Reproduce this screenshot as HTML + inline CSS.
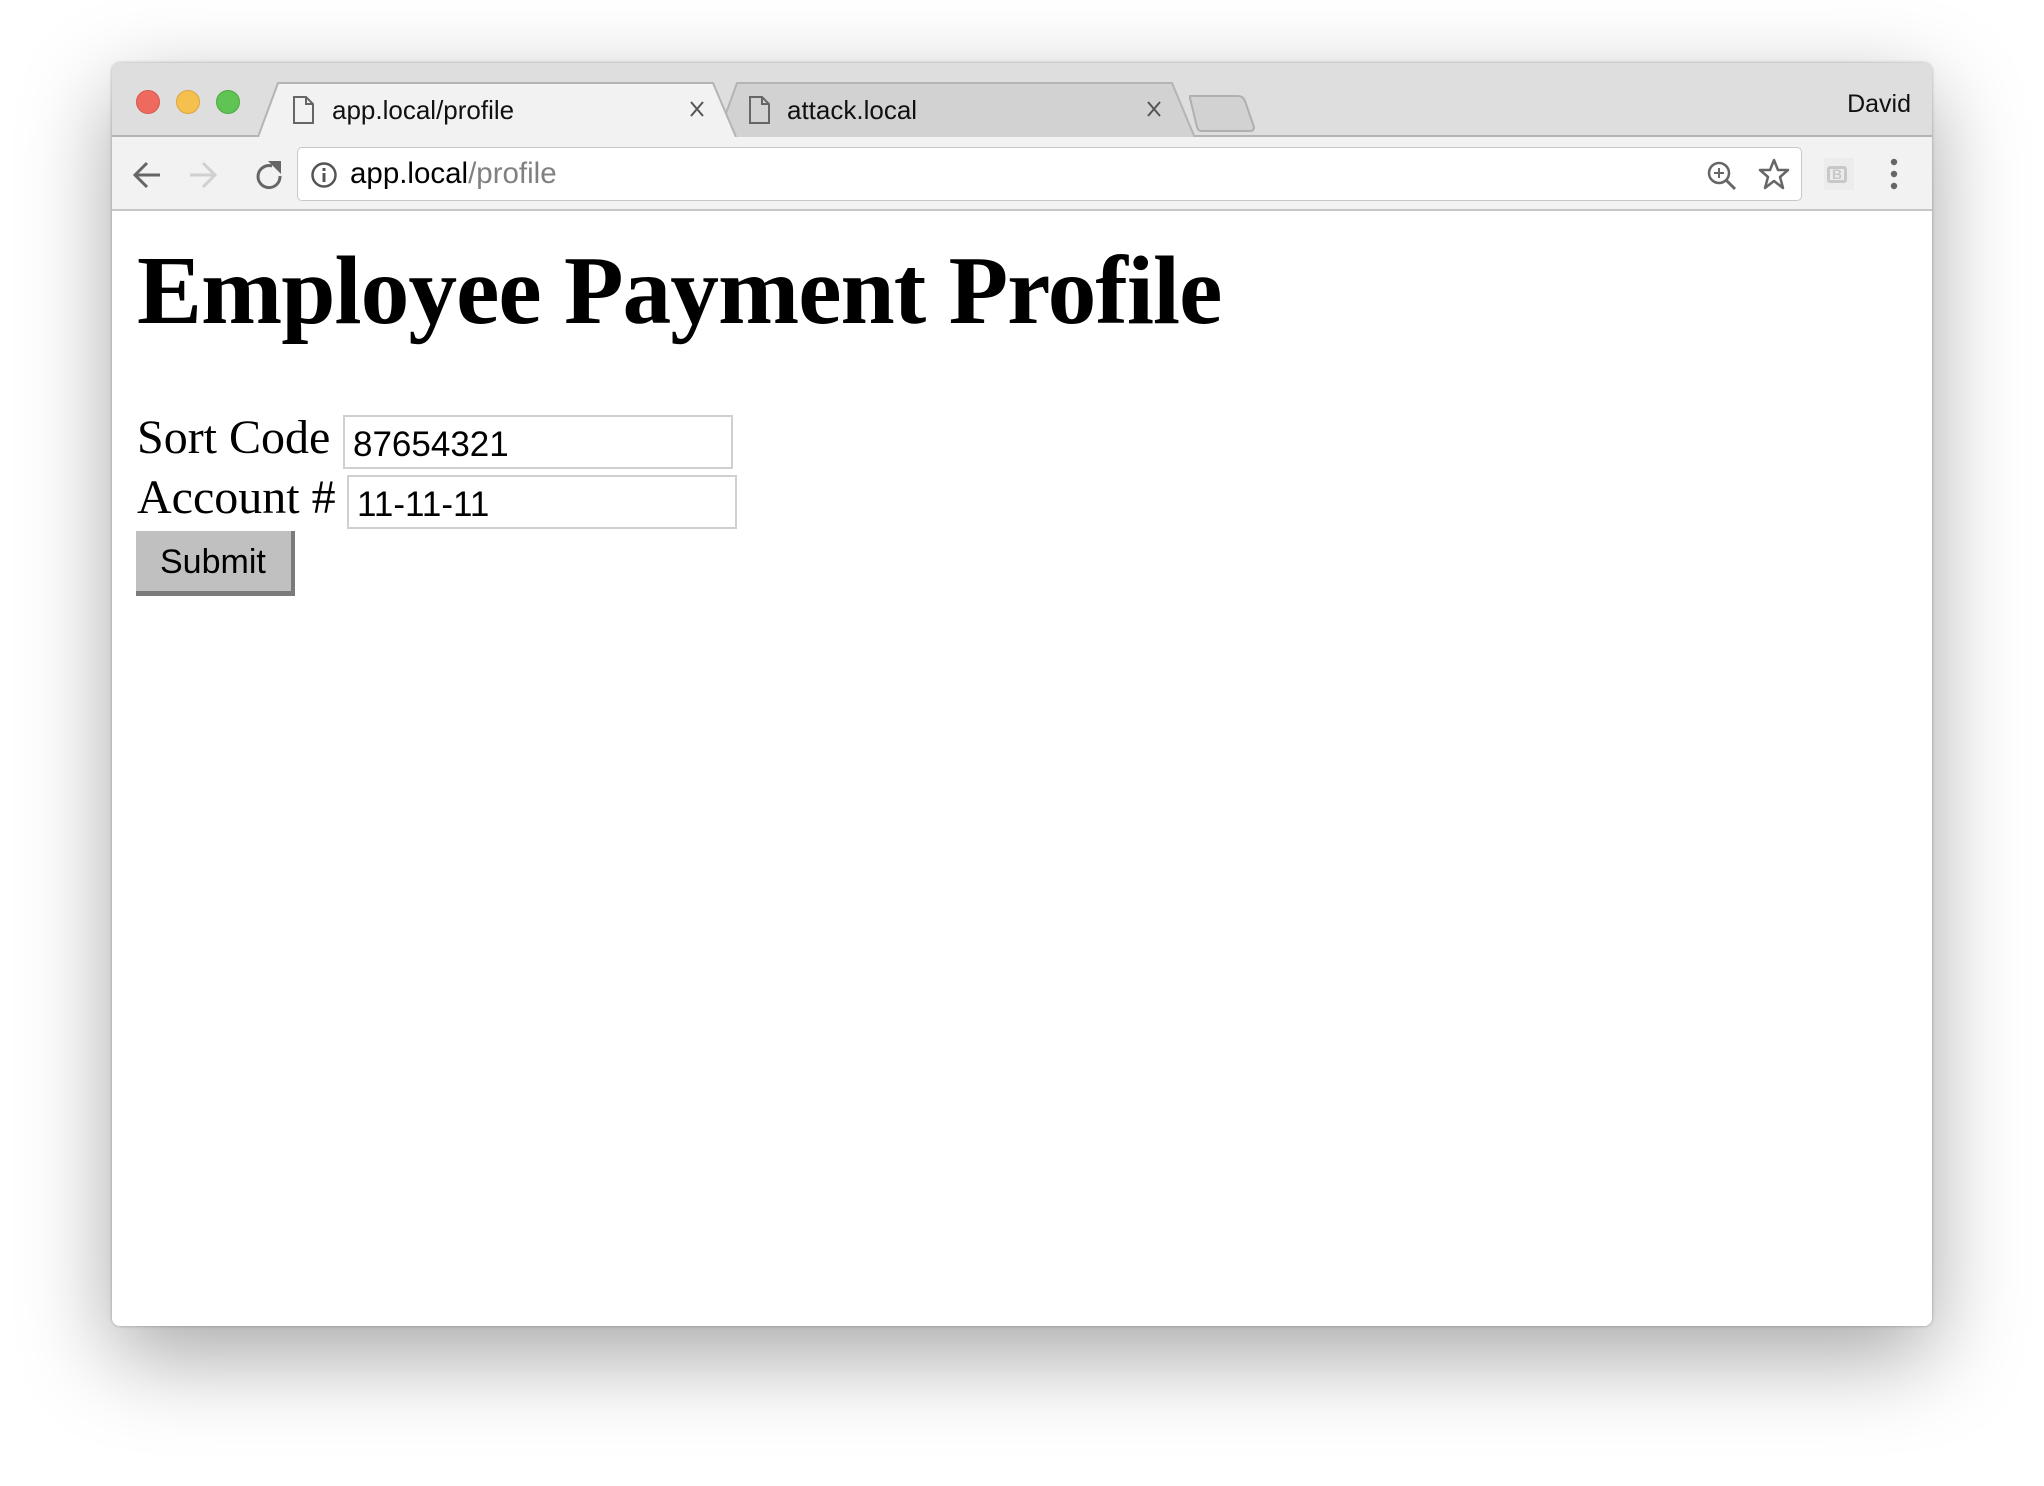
<!DOCTYPE html>
<html><head><meta charset="utf-8"><style>
*{box-sizing:border-box;margin:0;padding:0}
body{width:2044px;height:1486px;background:#fff;position:relative;overflow:hidden;font-family:"Liberation Sans",sans-serif}
.win{position:absolute;left:112px;top:63px;width:1820px;height:1263px;border-radius:8px;background:#fff;box-shadow:0 30px 90px rgba(0,0,0,.35),0 0 3px rgba(0,0,0,.3);overflow:hidden}
.tabbar{position:absolute;left:0;top:0;width:100%;height:74px;background:#dedede;border-bottom:2px solid #b4b4b4}
.tl{position:absolute;top:27px;width:24px;height:24px;border-radius:50%}
.tab{position:absolute;top:18px;height:56px}
.tab svg{position:absolute;left:0;top:0}
.tabtxt{position:absolute;top:13px;font-size:26px;color:#111}
.toolbar{position:absolute;left:0;top:74px;width:100%;height:74px;background:#f2f2f2;border-bottom:2px solid #c6c6c6}
.omni{position:absolute;left:185px;top:10px;width:1505px;height:54px;background:#fff;border:1.5px solid #c8c8c8;border-radius:5px}
.content{position:absolute;left:0;top:148px;width:100%;bottom:0;background:#fff}
h1{position:absolute;left:25px;top:24px;font-family:"Liberation Serif",serif;font-weight:bold;font-size:97.5px;letter-spacing:-1px;white-space:nowrap}
.lbl{position:absolute;font-family:"Liberation Serif",serif;font-size:48px;white-space:nowrap}
.inp{position:absolute;width:390px;height:54px;border:2px solid #d0d0d0;font-size:35px;padding:8px 0 0 8px}
.btn{position:absolute;left:24px;top:320px;width:159px;height:65px;background:#c0c0c0;border-right:4px solid #7a7a7a;border-bottom:5px solid #7a7a7a;font-size:34px;padding:12px 0 0 24px}
</style></head><body>
<div class="win">
 <div class="tabbar">
  <div class="tl" style="left:24px;background:#ee6a5e;border:1px solid #d8574b"></div>
  <div class="tl" style="left:64px;background:#f6c04f;border:1px solid #dca53b"></div>
  <div class="tl" style="left:104px;background:#5fc454;border:1px solid #4ca941"></div>
  <div class="tab" style="left:605px;width:480px">
   <svg width="480" height="58"><path d="M0 57 L20 2 L455 2 L478 57" fill="#d2d2d2" stroke="#b4b4b4" stroke-width="2"/></svg>
  </div>
  <svg style="position:absolute;left:146px;top:18px" width="480" height="58"><path d="M0 56 L20 2 L455 2 L478 56" fill="#f2f2f2" stroke="#b4b4b4" stroke-width="2"/><rect x="2" y="55" width="474" height="4" fill="#f2f2f2"/></svg>
  <svg style="position:absolute;left:180px;top:32px" width="24" height="30"><path d="M2 2 H14 L21 9 V28 H2 Z M14 2 V9 H21" fill="none" stroke="#666" stroke-width="2"/></svg>
  <div class="tabtxt" style="left:220px;top:32px">app.local/profile</div>
  <svg style="position:absolute;left:578px;top:38px" width="14" height="16"><path d="M1 1 L13 15 M13 1 L1 15" stroke="#555" stroke-width="2"/></svg>
  <svg style="position:absolute;left:636px;top:32px" width="24" height="30"><path d="M2 2 H14 L21 9 V28 H2 Z M14 2 V9 H21" fill="none" stroke="#666" stroke-width="2"/></svg>
  <div class="tabtxt" style="left:675px;top:32px">attack.local</div>
  <svg style="position:absolute;left:1035px;top:38px" width="14" height="16"><path d="M1 1 L13 15 M13 1 L1 15" stroke="#555" stroke-width="2"/></svg>
  <svg style="position:absolute;left:1076px;top:30px" width="70" height="40"><path d="M2 3 L50 3 Q55 3 57 8 L66 34 Q66 38 62 38 L14 38 Q10 38 9 34 L2 5 Z" fill="#d2d2d2" stroke="#b0b0b0" stroke-width="2"/></svg>
  <div style="position:absolute;right:21px;top:27px;font-size:25px;color:#111">David</div>
 </div>
 <div class="toolbar">
  <svg style="position:absolute;left:20px;top:22px" width="190" height="32">
   <path d="M28 16 H4 M15 4 L3 16 L15 28" fill="none" stroke="#666" stroke-width="3"/>
   <path d="M58 16 H82 M71 4 L83 16 L71 28" fill="none" stroke="#d0d0d0" stroke-width="3"/>
   <path d="M140 7 A11 11 0 1 0 148 17" fill="none" stroke="#666" stroke-width="3"/>
   <path d="M136 2 L149 2 L149 15 Z" fill="#666"/>
  </svg>
  <div class="omni">
   <svg style="position:absolute;left:12px;top:13px" width="28" height="28"><circle cx="14" cy="14" r="11.5" fill="none" stroke="#555" stroke-width="2.5"/><rect x="12.5" y="12" width="3" height="9" fill="#555"/><rect x="12.5" y="7" width="3" height="3" fill="#555"/></svg>
   <div style="position:absolute;left:52px;top:9px;font-size:29.5px;color:#000;white-space:nowrap">app.local<span style="color:#808080">/profile</span></div>
   <svg style="position:absolute;left:1408px;top:12px" width="32" height="32"><circle cx="13" cy="13" r="10" fill="none" stroke="#666" stroke-width="2.5"/><path d="M20 20 L29 29" stroke="#666" stroke-width="3"/><path d="M13 8 V18 M8 13 H18" stroke="#666" stroke-width="2"/></svg>
   <svg style="position:absolute;left:1460px;top:10px" width="32" height="32"><path d="M16 2 L20 12 L30 12 L22 19 L25 30 L16 23 L7 30 L10 19 L2 12 L12 12 Z" fill="none" stroke="#666" stroke-width="2.5" stroke-linejoin="round"/></svg>
  </div>
  <div style="position:absolute;left:1712px;top:21px;width:30px;height:32px;background:#ececec"><div style="position:absolute;left:3px;top:8px;width:20px;height:17px;border:3px solid #c8c8c8;border-radius:3px;font:bold 14px 'Liberation Sans';color:#c8c8c8;text-align:center;line-height:11px">B</div></div>
  <svg style="position:absolute;left:1776px;top:20px" width="12" height="34"><circle cx="6" cy="5" r="3.2" fill="#666"/><circle cx="6" cy="17" r="3.2" fill="#666"/><circle cx="6" cy="29" r="3.2" fill="#666"/></svg>
 </div>
 <div class="content">
  <h1>Employee Payment Profile</h1>
  <div class="lbl" style="left:25px;top:199px">Sort Code</div>
  <div class="inp" style="left:231px;top:204px">87654321</div>
  <div class="lbl" style="left:25px;top:259px">Account #</div>
  <div class="inp" style="left:235px;top:264px">11-11-11</div>
  <div class="btn">Submit</div>
 </div>
</div>
</body></html>
